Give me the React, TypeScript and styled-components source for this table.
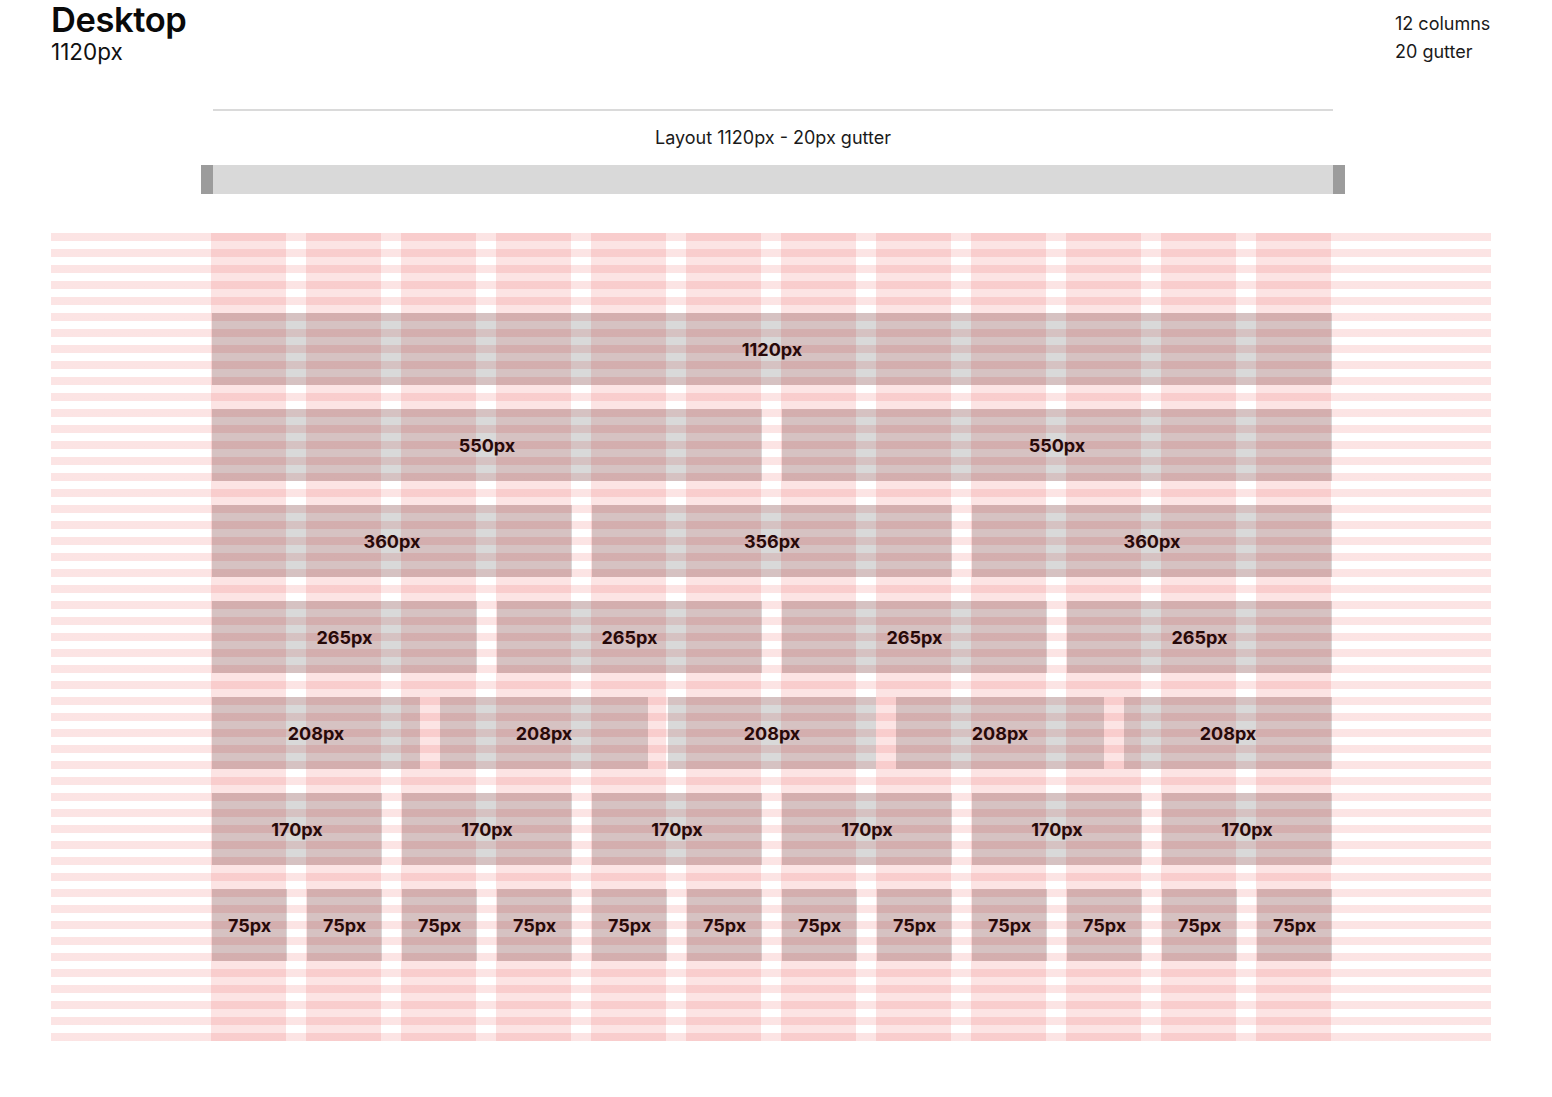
import React from "react";
import styled, { createGlobalStyle } from "styled-components";

const GlobalStyle = createGlobalStyle`
  body {
    margin: 0;
    background: #ffffff;
    font-family: Inter, "Noto Sans", sans-serif;
    color: #111111;
  }
`;

const Page = styled.div`
  width: 1440px;
  padding: 0 51px;
`;

const Header = styled.header`
  display: flex;
  justify-content: space-between;
  align-items: flex-start;
`;

const Title = styled.h1`
  margin: 1px 0 0;
  font-size: 34.5px;
  line-height: 38px;
  font-weight: 600;
  letter-spacing: -0.4px;
  color: #0a0a0a;
`;

const Subtitle = styled.div`
  font-size: 22.5px;
  line-height: 26px;
  color: #111111;
`;

const Meta = styled.div`
  padding-top: 10px;
  width: 96px;
  font-size: 18px;
  line-height: 28px;
  color: #1a1a1a;
  white-space: nowrap;
`;

const Ruler = styled.section`
  width: 1120px;
  margin: 43px 0 0 162px;
  border-top: 2px solid #dadada;
  padding-top: 17px;
`;

const RulerLabel = styled.div`
  text-align: center;
  font-size: 18px;
  line-height: 20px;
  color: #1a1a1a;
`;

const RulerBar = styled.div`
  margin: 17px 0 0 -12px;
  width: 1120px;
  height: 29px;
  background: #d9d9d9;
  border-left: 12px solid #9c9c9c;
  border-right: 12px solid #9c9c9c;
`;

const Canvas = styled.div`
  margin-top: 39px;
  width: 1440px;
  display: grid;
  background: repeating-linear-gradient(
    to bottom,
    rgba(235, 87, 87, 0.16) 0 8px,
    transparent 8px 16px
  );
  & > * {
    grid-area: 1 / 1;
  }
`;

const Columns = styled.div`
  margin-left: 160px;
  width: 1120px;
  display: grid;
  grid-template-columns: repeat(12, 75px);
  column-gap: 20px;
`;

const Column = styled.div`
  background: rgba(235, 87, 87, 0.16);
`;

const Stack = styled.div`
  margin-left: 161px;
  width: 1120px;
  padding: 80px 0;
  display: flex;
  flex-direction: column;
  gap: 24px;
  position: relative;
`;

const Row = styled.div<{ $count: number }>`
  display: grid;
  grid-template-columns: repeat(${(p) => p.$count}, 1fr);
  column-gap: 20px;
`;

const Block = styled.div`
  height: 72px;
  display: flex;
  align-items: center;
  justify-content: center;
  background: rgba(0, 0, 0, 0.15);
  font-size: 18px;
  font-weight: 700;
  color: #270909;
`;

const repeat = (label: string, n: number) => Array.from({ length: n }, () => label);

const rows: string[][] = [
  ["1120px"],
  ["550px", "550px"],
  ["360px", "356px", "360px"],
  repeat("265px", 4),
  repeat("208px", 5),
  repeat("170px", 6),
  repeat("75px", 12),
];

const App = () => {
  return (
    <Page>
      <GlobalStyle />
      <Header>
        <div>
          <Title>Desktop</Title>
          <Subtitle>1120px</Subtitle>
        </div>
        <Meta>
          <div>12 columns</div>
          <div>20 gutter</div>
        </Meta>
      </Header>
      <Ruler>
        <RulerLabel>Layout 1120px - 20px gutter</RulerLabel>
        <RulerBar />
      </Ruler>
      <Canvas>
        <Columns>
          {Array.from({ length: 12 }, (_, i) => (
            <Column key={i} />
          ))}
        </Columns>
        <Stack>
          {rows.map((row, i) => (
            <Row key={i} $count={row.length}>
              {row.map((label, j) => (
                <Block key={j}>{label}</Block>
              ))}
            </Row>
          ))}
        </Stack>
      </Canvas>
    </Page>
  );
};

export default App;
